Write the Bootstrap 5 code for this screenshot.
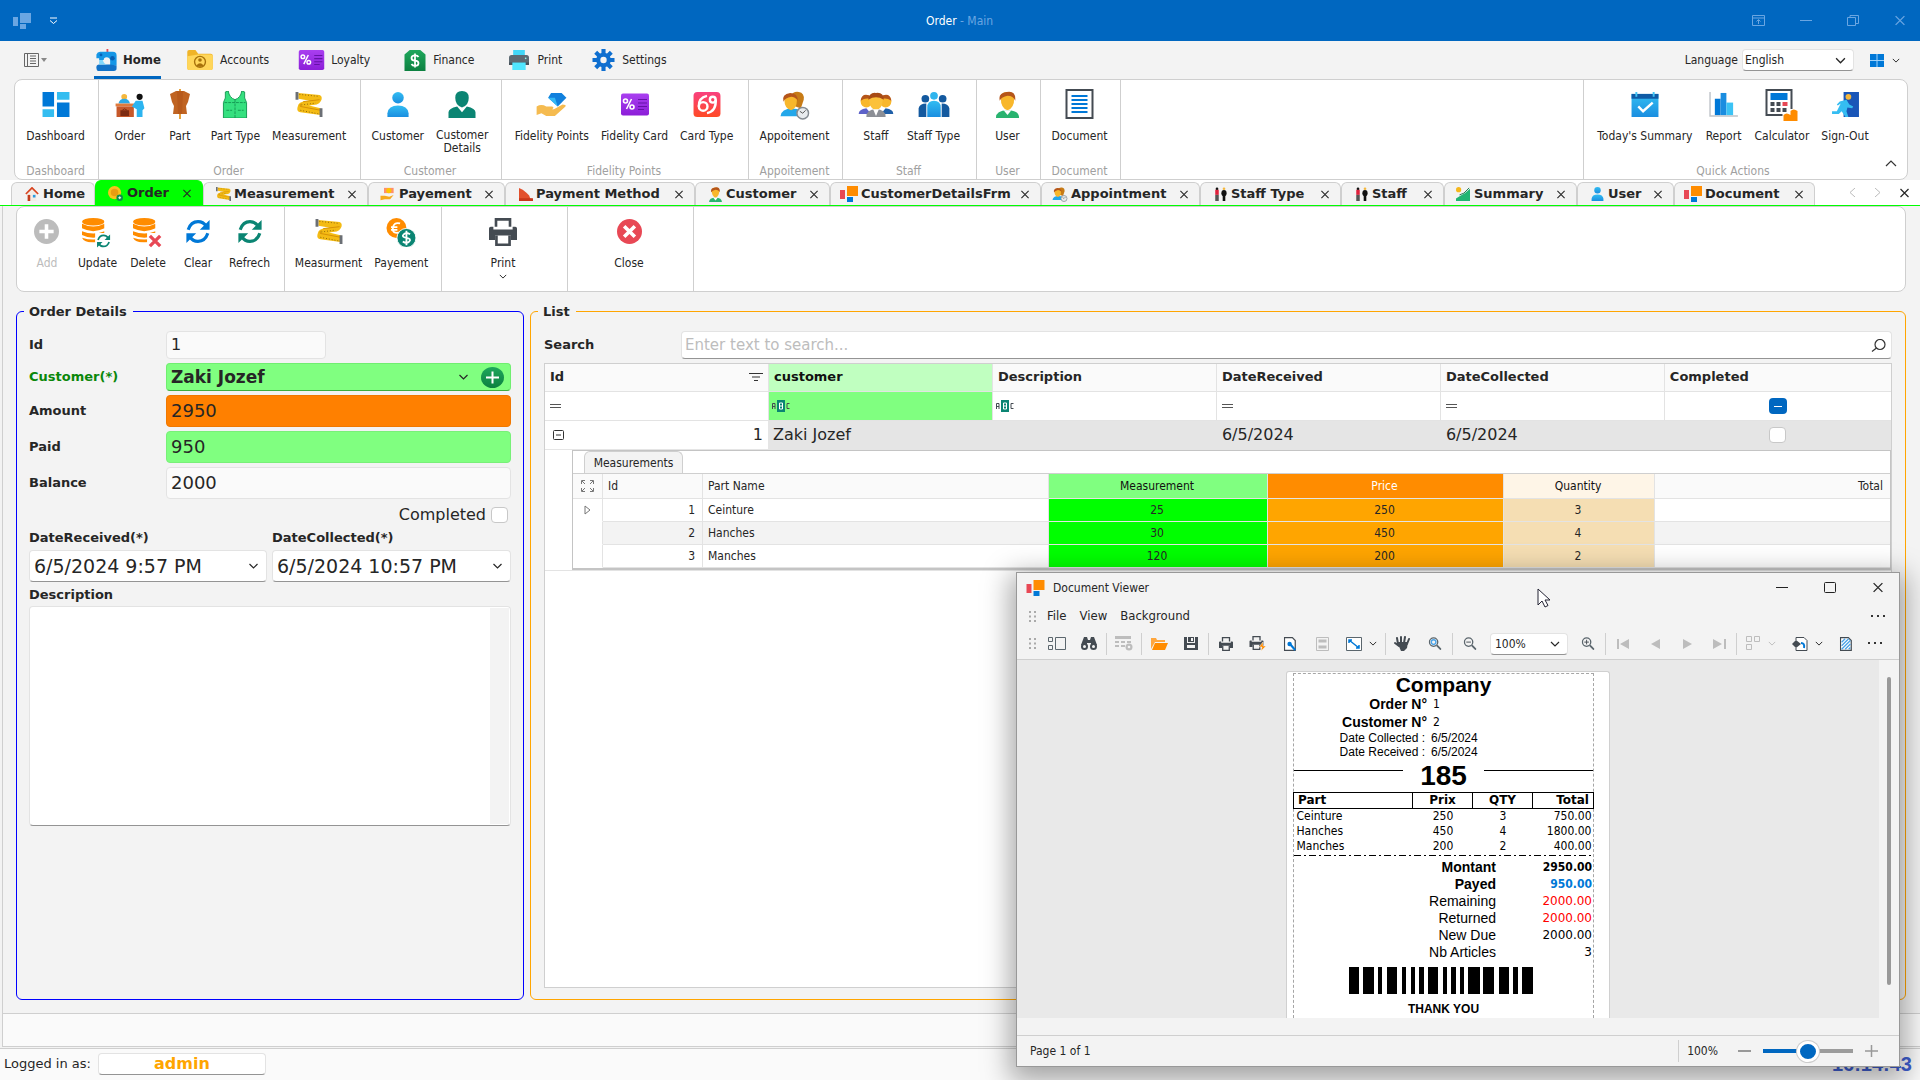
<!DOCTYPE html>
<html lang="en">
<head>
<meta charset="utf-8">
<meta name="viewport" content="width=device-width, initial-scale=1">
<title>Order - Main</title>
<link href="https://cdn.jsdelivr.net/npm/bootstrap@5.3.0/dist/css/bootstrap.min.css" rel="stylesheet">
<style>
:root{--line:#cfcfcf;--soft:#e3e3e3;--accent:#0067c0;--wide:"DejaVu Sans",Verdana,sans-serif;--ui:"DejaVu Sans Condensed","DejaVu Sans",Tahoma,sans-serif;--arial:"Liberation Sans",Arial,sans-serif}
body{background:#f3f3f3;color:#262626;font:12px/14px var(--ui);min-height:100vh;overflow:hidden}
svg{display:block;flex:none}
button{background:none;border:0;padding:0;color:inherit;font:inherit}
input,select,textarea{font:inherit;color:inherit;border:0;background:none;padding:0;min-width:0;outline:0}
select{appearance:none}
.strong{font:bold 13px/16px var(--wide)}
.titlebar{height:41px;background:var(--accent);color:#fff;padding:0 14px 0 13px}
.titlebar .grow{flex:1 1 0}
.dim{color:#6aa6e2}
.menubar{height:38px;padding:0 20px 0 24px}
.menubar .entry{height:38px;display:flex;align-items:center;gap:6px;color:inherit;text-decoration:none;border-top:3px solid transparent;border-bottom:3px solid transparent}
.menubar .entry.on{border-bottom-color:var(--accent);font-weight:bold;font-size:13px;gap:4px}
.field{background:#fff;border:1px solid var(--soft);border-bottom-color:#949494;border-radius:4px;display:flex;align-items:center}
.ribbon{display:grid;grid-template-columns:84px 262px 141px 247px 94px 134px 64px 80px 1fr 323px;margin:0 12px 0 14px;background:#fff;border:1px solid var(--line);border-radius:8px;height:101px}
.ribbon>div{border-right:1px solid var(--line);display:flex;flex-direction:column;align-items:center;padding-right:2px}
.ribbon>div:last-child{border-right:0;position:relative;padding-right:25px}
.caption-s{color:#a0a0a0;margin-top:auto;margin-bottom:1px}
.tool{min-width:50px;padding:12px 6px 0;display:flex;flex-direction:column;align-items:center;text-align:center}
.tool svg{margin-bottom:12px}
.tabs{display:grid;grid-template-columns:84px 108px 165px 137px 190px 135px 211px 159px 141px 103px 133px 97px 141px 1fr;align-items:end;background:#fff;padding:0 8px 0 11px;height:26px;border-bottom:1px solid #00ff00}
.tabs .doc{height:23px;background:#f3f3f3;border:1px solid var(--line);border-bottom:0;border-radius:6px 6px 0 0;display:flex;align-items:center;padding:0 10px 0 12px;gap:3px;font:bold 13px/16px var(--wide);white-space:nowrap}
.tabs .doc button{margin-left:auto}
.tabs .doc.on{height:25px;background:#00ff00;border-color:#00ff00;padding-left:11px;z-index:1}
.workspace{border-left:1px solid var(--line);margin-left:2px;flex:1;display:flex;flex-direction:column;padding:0 14px 0 13px}
.toolbar2{display:grid;grid-template-columns:268px 157px 126px 126px 1fr;background:#fff;border:1px solid var(--line);border-radius:8px;height:86px}
.toolbar2>div{border-right:1px solid var(--line);display:flex;justify-content:center;padding-right:3px}
.toolbar2>div:last-child{border:0}
.boxed{border:1px solid blue;border-radius:6px;position:relative;height:689px}
.boxed>.strong:first-child{position:absolute;top:-8px;left:7px;padding:0 6px 0 5px;background:#f3f3f3}
.boxed.gold{border-color:#ffa500}
.details{width:508px;padding:19px 12px 0;flex:none}
.frow{display:grid;grid-template-columns:137px 1fr;align-items:center;margin-bottom:4px}
.frow .field{height:32px;font:18px/24px var(--wide);padding:0 4px}
.ro{background:#fafafa!important;border-bottom-color:var(--soft)!important}
.big{font:18px/24px var(--wide)}
.datebox{height:32px;padding:0 7px 0 4px;font:19px/24px var(--wide)}
.datebox input{width:100%}
.check{appearance:none;width:17px;height:16px;background:#fff;border:1px solid #c8c8c8;border-radius:4px}
.listbox{padding:19px 13px 11px;margin-left:6px;flex:1;display:flex;flex-direction:column}
.gridwrap{border:1px solid var(--line);background:#fff;flex:1;margin-top:4px}
.data{width:100%;table-layout:fixed;border-collapse:separate;border-spacing:0}
.data th,.data td{border-right:1px solid var(--soft);border-bottom:1px solid var(--soft);padding:0 5px;vertical-align:middle}
.data>thead>tr>th{height:28px;padding-bottom:1px}
.data>thead>tr.fl>td,.data>tbody>tr>td{height:29px}
.data th:last-child,.data td:last-child{border-right:0}
.data th{background:#fafafa;font:bold 13px/16px var(--wide)}
.data .picked td{background:#e5e5e5;border-color:#e5e5e5;font:16px/20px var(--wide)}
.data .picked td:first-child{background:#fff}
.data>tbody>tr>td.nest{padding:0 0 0 27px;height:auto}
.nestbox{border:1px solid #c4c4c4;border-bottom-width:2px}
.ntab{margin-left:11px;width:99px;height:22px;background:#f3f3f3;border:1px solid var(--line);border-bottom:0;border-radius:6px 6px 0 0;display:flex;justify-content:center;align-items:center}
.sub{width:100%;table-layout:fixed;border-collapse:separate;border-spacing:0;border-top:1px solid var(--line)}
.sub th{font:12px/14px var(--ui);height:25px}
.sub th.text-end,.sub th.text-center,.sub td.text-center,.sub td.text-end{padding-right:7px}
.sub td{height:23px}
.sub tr:nth-child(even) td{background:#f3f3f3}
.sub tr td:first-child{background:#fff!important;border-bottom-color:#fff}
.sub td.m{background:#00ff00!important}.sub td.p{background:#ffa500!important}.sub td.q{background:#f5deb3!important}
.sub th.m{background:#80ff80;color:#111}.sub th.p{background:#ff8c00;color:#fff}.sub th.q{background:#fef5e7;color:#111}
.strip{height:34px;margin:13px -14px 0 -13px;background:#fafafa;border-top:1px solid var(--line);border-bottom:1px solid var(--line)}
.footbar{height:33px;margin-top:1px;border-top:1px solid var(--line);background:#fafafa;padding:0 8px 2px 4px;font:13px/16px var(--wide)}
.clock{font:bold 20px/24px var(--arial);color:#3f5fd0}
.viewer{position:absolute;right:20px;bottom:13px;width:884px;height:495px;background:#f3f3f3;border:1px solid #989898;box-shadow:0 8px 26px 6px rgba(0,0,0,.34);display:flex;flex-direction:column}
.vbar{display:flex;align-items:center;height:30px;border-bottom:1px solid var(--line);padding:0 0 2px 8px}
.slot{flex:none;width:32px;display:flex;justify-content:center;align-items:center}
.slot.wide{width:46px;gap:7px}
.rule{flex:none;width:1px;height:22px;margin:0 1px;background:#cfcfcf}
.canvas{flex:1;display:flex;background:#e9e9e9;min-height:0;overflow:hidden}
.sheet{width:324px;margin:11px auto 0;background:#fff;border:1px solid #d0d0d0;border-bottom:0;border-radius:3px 3px 0 0;padding:1px 15px 0 6px}
.inner{border:1px dashed #a6a6a6;border-bottom:0;height:100%;color:#000}
.r2{display:grid;grid-template-columns:133px 1fr;column-gap:6px;align-items:center}
.r2>:first-child{text-align:right;white-space:nowrap}
.ar{font-family:var(--arial)}
.rcpt{width:301px;margin-left:-1px;table-layout:fixed;border-collapse:collapse}
.rcpt th{border:1px solid #000;font:bold 12px/15px var(--wide);padding:0 4px}
.rcpt td{font:12px/15px var(--ui);padding:0 2px 0 3px}
.sum{display:grid;grid-template-columns:202px 1fr;font:14px/17px var(--arial);padding-right:1px;margin-top:2px}
.sum>*{text-align:right}
.sum>:nth-child(even){font:12px/16px var(--wide)}
.sum .hv{font:bold 12px/16px var(--ui)}
.zoomer{appearance:none;width:90px;height:22px;background:linear-gradient(90deg,var(--accent) 50%,#9c9c9c 50%) center/100% 4px no-repeat;border-radius:2px}
.zoomer::-webkit-slider-thumb{appearance:none;width:22px;height:21px;border-radius:50%;background:var(--accent);border:3px solid #fff;box-shadow:0 0 0 1px #ccc}
.find::placeholder{color:#bdbdbd;opacity:1}
.cursor{position:absolute;left:520px;top:15px}
</style>
</head>
<body class="d-flex flex-column">
<svg width="0" height="0" class="position-absolute">
<defs>
<linearGradient id="gp" x2="0" y2="1"><stop stop-color="#a93ff0"/><stop offset="1" stop-color="#8c1ed8"/></linearGradient>
<linearGradient id="gr" x2="0" y2="1"><stop stop-color="#f9417f"/><stop offset="1" stop-color="#ff4a25"/></linearGradient>
<linearGradient id="gb" x2="0" y2="1"><stop stop-color="#33bdf2"/><stop offset="1" stop-color="#1a8ee0"/></linearGradient>
<linearGradient id="gg" x2="0" y2="1"><stop stop-color="#1ea75c"/><stop offset="1" stop-color="#0c8040"/></linearGradient>
<symbol id="x" viewBox="0 0 10 10"><path d="M1 1l8 8M9 1L1 9" stroke="currentColor" stroke-width="1.2" fill="none"/></symbol>
<symbol id="dn" viewBox="0 0 10 6"><path d="M1 1l4 4 4-4" stroke="currentColor" stroke-width="1.2" fill="none"/></symbol>
<symbol id="logo" viewBox="0 0 18 16"><path d="M0 4h5v9H0z" fill="#e84855"/><path d="M7 0h11v10H7z" fill="#ff8c00"/><path d="M7 11h6v5H7z" fill="#0078d7"/></symbol>
<symbol id="sew" viewBox="0 0 24 24"><path d="M12 0h2v4h-2z" fill="#e84855"/><path d="M1 6q1-3 4-3h14q4 0 4 4v11h-7v-5q0-4-4-4-3 0-3 3H4v-2H1z" fill="#1596e6"/><path d="M1 20q0-3 3-3h12l7 1v3q0 3-3 3H3q-2 0-2-4z" fill="#1172c8"/><path d="M4 12h4q1 5 6 5H4z" fill="#7fd6fb"/><circle cx="18.500" cy="10" r="2.500" fill="#065fb5"/><circle cx="6" cy="6.500" r="1.500" fill="#065fb5"/></symbol>
<symbol id="folder" viewBox="0 0 28 22"><path d="M0 2q0-2 2-2h7l3 4h14q2 0 2 2v14q0 2-2 2H2q-2 0-2-2z" fill="#f0b428"/><path d="M0 7l12-2h14q2 0 2 2v13q0 2-2 2H2q-2 0-2-2z" fill="#ffd65a"/><circle cx="14" cy="13" r="6" fill="none" stroke="#a8720b" stroke-width="1.500"/><circle cx="14" cy="11" r="2" fill="#a8720b"/><path d="M10 17q4-5 8 0q-4 3-8 0z" fill="#a8720b"/></symbol>
<symbol id="card" viewBox="0 0 28 22"><rect width="28" height="22" rx="2" fill="url(#gp)"/><g stroke="#fff" fill="none" stroke-width="1.600"><circle cx="4.500" cy="7.500" r="2"/><circle cx="11" cy="13.500" r="2"/><path d="M10.500 5.500l-5 10"/></g><path d="M17 6h9M17 9.500h9M17 13h9M17 16h6" stroke="#6512a8" stroke-width="1.200"/></symbol>
<symbol id="tag" viewBox="0 0 24 24"><path d="M0 5L6 0h12l6 5v19H0z" fill="url(#gg)"/><path d="M16 8q-1-2-4-2-4 0-4 3t4 3 4 3-4 3q-3 0-4-2M12 4v16" stroke="#fff" stroke-width="2" fill="none"/></symbol>
<symbol id="prn" viewBox="0 0 24 24"><path d="M5 0h14v7H5z" fill="#42d7f7"/><path d="M0 9q0-3 3-3h18q3 0 3 3v9H0z" fill="#5d6a73"/><path d="M0 15h24v3H0z" fill="#46515a"/><path d="M4 15h16v9H4z" fill="#50e6ff"/><circle cx="20" cy="10" r="1" fill="#9fe"/></symbol>
<symbol id="gear" viewBox="0 0 24 24"><g stroke="#0f6fd0" stroke-width="4.500"><path d="M12 0v24M0 12h24M3.500 3.500l17 17M20.500 3.500l-17 17"/></g><circle cx="12" cy="12" r="8" fill="#0f6fd0"/><circle cx="12" cy="12" r="3.500" fill="#f3f3f3"/></symbol>
<symbol id="dash" viewBox="0 0 28 26"><path d="M0 0h12v15H0zM15 11h13v15H15z" fill="#0078d7"/><path d="M15 0h13v8H15zM0 18h12v8H0z" fill="#34bdf0"/></symbol>
<symbol id="desk" viewBox="0 0 30 26"><circle cx="9" cy="5" r="3" fill="#f5b73c"/><path d="M3 12q1-5 6-5t6 5z" fill="#2da9e6"/><path d="M0 12h20v3H0z" fill="#e07a3c"/><path d="M1 15h18v11H1z" fill="#c6582a"/><path d="M5 19h9v6H5z" fill="#7c2b12"/><path d="M7 19q2-3 5 0" stroke="#7c2b12" fill="none"/><circle cx="25" cy="5" r="3.200" fill="#111"/><path d="M21 9h7l2 8-2 2v7h-6v-8l-5-3z" fill="#2cb4f0"/></symbol>
<symbol id="torso" viewBox="0 0 20 30"><path d="M9 0h2v30H9z" fill="#e8a33a"/><path d="M6 2h8l6 3-2 8-2 4 1 8H3l1-8-2-4L0 5z" fill="#c06422"/><path d="M7 2h6l-1 23H8z" fill="#a94c14" opacity=".4"/></symbol>
<symbol id="vest" viewBox="0 0 26 28"><path d="M6 0q1 7 7 9 6-2 7-9l3 1q-1 7 2 11v16H1V12q3-4 2-11z" fill="#35e07f" stroke="#159a53"/><path d="M13 9v19M2 12h22M4 20h6M16 20h6" stroke="#159a53" fill="none" stroke-dasharray="3 1"/></symbol>
<symbol id="tape" viewBox="0 0 28 26"><path d="M3 1l22 2q3 1 2 5l-1 2q-1 2-4 3l-8 1 12 3v7L5 21q-4-1-3-5l1-3q1-2 5-3l7-1L3 7z" fill="#f4bb14"/><path d="M8 10l17-2M6 12q-2 1-1 3l21 4" stroke="#d58f05" fill="none"/><path d="M4 2.500l20 2M6 13.500l15-2M5 19l20 4" stroke="#8c6508" stroke-dasharray="1 2" fill="none"/><path d="M0 0h3v8H0zM25 17h3v9h-3z" fill="#6b6f75"/></symbol>
<symbol id="person" viewBox="0 0 22 26"><circle cx="11" cy="6" r="6" fill="url(#gb)"/><path d="M0 26V22Q1 14 11 14t11 8v4z" fill="url(#gb)"/></symbol>
<symbol id="man" viewBox="0 0 28 28"><path d="M7 7q0-7 7-7t7 7q0 8-7 10Q7 15 7 7zM0 28v-6q0-4 9-6l5 6 5-6q9 2 9 6v6z" fill="#0b8573"/></symbol>
<symbol id="gem" viewBox="0 0 32 26"><path d="M15 1h11l5 5-9 9-10-9z" fill="#1180dd"/><path d="M12 6l10 9-3-9z" fill="#34b8f5"/><path d="M0 15q5-3 10 0h6q3 1 0 3h-5 7l9-5q4 0 3 2L19 25H10l-5-3-5 2z" fill="#f5bb50"/></symbol>
<symbol id="sixnine" viewBox="0 0 28 26"><rect width="28" height="26" rx="4" fill="url(#gr)"/><g fill="none" stroke="#fff" stroke-width="2.500"><circle cx="10" cy="15" r="4.500"/><path d="M14 4Q5 6 5.500 15"/><circle cx="20" cy="8" r="3"/><path d="M23 8q1 12-9 14"/></g></symbol>
<symbol id="face" viewBox="0 0 24 28"><path d="M0 28q0-8 12-8t12 8z" fill="#28b36f"/><path d="M5 7q0-6 7-6t7 6q0 11-7 13Q5 18 5 7z" fill="#f8b72c"/><path d="M4 10Q2 2 11 1q10-2 9 9-2-5-8-5-6 1-8 5z" fill="#b5551a"/><path d="M8 20h8l-4 5z" fill="#fff"/></symbol>
<symbol id="appt" viewBox="0 0 30 30"><path d="M11 5q2-5 8-4t5 8l-3 9-8-3z" fill="#c77b16"/><path d="M0 26q1-8 12-8t14 8z" fill="#23a7ea"/><path d="M4 9q0-6 7-6t6 6q0 9-6 11Q4 18 4 9z" fill="#f8b72c"/><path d="M3 11Q1 3 10 2q8 0 8 8-3-4-7-4-6 1-8 5z" fill="#b5551a"/><circle cx="23" cy="23" r="6" fill="#e8ebee" stroke="#858c93" stroke-width="1.500"/><path d="M20 21l3 2 3-3" stroke="#555" fill="none"/></symbol>
<symbol id="staff" viewBox="0 0 36 26"><path d="M0 23q0-5 8-6l5 6z" fill="#5d62c9"/><path d="M36 23q0-5-8-6l-5 6z" fill="#1f5fa8"/><circle cx="8" cy="10" r="6" fill="#f8b72c"/><circle cx="28" cy="10" r="6" fill="#f8b72c"/><path d="M2 9q1-7 7-6 4 0 5 5-6-3-12 1zM34 9q-1-7-7-6-4 0-5 5 6-3 12 1z" fill="#b5551a"/><path d="M8 26q0-8 10-8t10 8z" fill="#8c8f96"/><path d="M11 8q0-7 7-7t7 7q0 9-7 11-7-2-7-11z" fill="#fbc13a"/><path d="M10 8q1-8 8-7 8-1 8 7-8-5-16 0z" fill="#a84b15"/><path d="M15 18h6l-3 7z" fill="#fff"/></symbol>
<symbol id="staff2" viewBox="0 0 32 26"><circle cx="7" cy="7" r="4" fill="#13599f"/><circle cx="25" cy="7" r="4" fill="#13599f"/><path d="M0 26V17q1-5 8-5v14zM32 26V17q-1-5-8-5v14z" fill="#13599f"/><circle cx="16" cy="4" r="4" fill="#2fb5ee"/><path d="M9 26V16q0-7 7-7t7 7v10z" fill="url(#gb)"/></symbol>
<symbol id="docu" viewBox="0 0 28 30"><path d="M1 1h26v28H1z" fill="#fff" stroke="#444b52" stroke-width="2"/><path d="M6 7h16M6 11h16M6 15h16M6 19h16M6 23h16" stroke="#0078d7" stroke-width="1.800"/></symbol>
<symbol id="cal" viewBox="0 0 28 26"><path d="M0 2h28v24H0z" fill="url(#gb)"/><path d="M0 2h28v5H0z" fill="#0f5ba5"/><path d="M5 0v5M23 0v5" stroke="#43c5f5" stroke-width="2"/><path d="M7 15l5 5 10-9" stroke="#fff" stroke-width="2.500" fill="none"/></symbol>
<symbol id="chart" viewBox="0 0 30 26"><path d="M1 0v25h29" stroke="#bfc4c9" stroke-width="1.500" fill="none"/><path d="M6 7h6v17H6z" fill="#0078d7"/><path d="M12 1h6v23h-6z" fill="#1a8de0"/><path d="M18 11h7v13h-7z" fill="#3cc3f5"/></symbol>
<symbol id="calc" viewBox="0 0 32 32"><path d="M1 1h25v25H1z" fill="#fff" stroke="#444b52" stroke-width="2"/><path d="M5 4h17v7H5z" fill="#0078d7"/><path d="M5 13h4v4H5zM11 13h4v4h-4zM5 19h4v4H5zM11 19h4v4h-4zM17 19h4v4h-4z" fill="#444b52"/><path d="M17 13h5v4h-5z" fill="#e84855"/><path d="M17 32v-8h6v-4h9v12z" fill="#fff"/><path d="M18 26q3-3 7 0v-4q3-3 7 0v10H18z" fill="#ff8c00"/></symbol>
<symbol id="exit" viewBox="0 0 28 26"><path d="M12 0h16v26H12z" fill="#1a56b8"/><circle cx="17" cy="5" r="3" fill="#f5b73c"/><path d="M8 10l7-2 3 5 4 2-1 2-5-1-1 4 2 6h-3l-4-6-3 3H0v-3h5l4-8-3 2-1-1z" fill="#35bdf2"/></symbol>
<symbol id="house" viewBox="0 0 16 16"><path d="M1 8l7-7 7 7" stroke="#d8431f" stroke-width="2" fill="none"/><path d="M3 8l5-5 5 5v8H3z" fill="#f3ece6"/><path d="M3 9h3v7H3z" fill="#c33c1c"/><path d="M9 9h3v3H9z" fill="#2a9be0"/></symbol>
<symbol id="coin" viewBox="0 0 16 16"><circle cx="7" cy="7" r="7" fill="#f8c21c"/><circle cx="7" cy="7" r="4" fill="#e89d11"/><circle cx="12.500" cy="12.500" r="3.500" fill="#0d8a4c"/><path d="M11 12.500h3M12.500 11v3" stroke="#fff"/></symbol>
<symbol id="payh" viewBox="0 0 16 16"><path d="M4 1h11v6H4z" fill="#ff8f6b"/><circle cx="9.500" cy="4" r="3" fill="#ffc400"/><path d="M0 10h5l5 1 5-2-4 5H5l-5 1z" fill="#f5a91c"/></symbol>
<symbol id="slice" viewBox="0 0 16 14"><path d="M1 0l4 2 4 3 3 3 1 3 3 1v2H1z" fill="#e2502d"/><path d="M1 11h15v3H1z" fill="#c9371a"/></symbol>
<symbol id="pair" viewBox="0 0 16 16"><path d="M2 3h4v6H2z" fill="#e0203c"/><circle cx="4" cy="2" r="1.500" fill="#111"/><path d="M2 9h4v7H2z" fill="#555"/><circle cx="12" cy="2" r="1.500" fill="#f5b73c"/><ellipse cx="12" cy="7" rx="3" ry="3.500" fill="#111"/><path d="M10.500 9h3v7h-3z" fill="#111"/></symbol>
<symbol id="grow" viewBox="0 0 16 16"><circle cx="3" cy="3" r="3" fill="#f5b71c"/><path d="M0 13l5-3 5-3 6-5v14H0z" fill="#21b573"/><path d="M4 9l5-2 6-6" stroke="#0c6b40" fill="none"/></symbol>
<symbol id="plus" viewBox="0 0 28 28"><circle cx="14" cy="14" r="14" fill="currentColor"/><path d="M14 6v16M6 14h16" stroke="#fff" stroke-width="4"/></symbol>
<symbol id="sync" viewBox="0 0 28 28"><path d="M3 12Q6 3 14 3q6 0 9 5M25 16q-3 9-11 9-6 0-9-5" fill="none" stroke="currentColor" stroke-width="3.500"/><path d="M27 1v11H16zM1 27V16h11z" fill="currentColor"/></symbol>
<symbol id="db" viewBox="0 0 24 26"><ellipse cx="12" cy="4" rx="12" ry="4" fill="#ff8c00"/><path d="M0 6q12 6 24 0v5q-12 6-24 0zM0 14q12 5 24 0v4q-12 6-24 0zM0 21q12 4 24 0-2 5-12 5T0 21z" fill="#ff8c00"/></symbol>
<symbol id="dbs" viewBox="0 0 32 32"><use href="#db" width="24" height="26"/><rect x="14" y="16" width="18" height="16" fill="#fff"/><use href="#sync" x="15" y="17" width="16" height="15" color="#0b8573"/></symbol>
<symbol id="dbx" viewBox="0 0 32 32"><use href="#db" width="24" height="26"/><rect x="15" y="16" width="17" height="16" fill="#fff"/><path d="M18 19l11 11M29 19L18 30" stroke="#e84855" stroke-width="3.500"/></symbol>
<symbol id="coins" viewBox="0 0 32 32"><circle cx="11" cy="11" r="11" fill="#ff8c00"/><path d="M15 6q-7-2-8 5t8 5M5 10h7M5 13h7" stroke="#fff" stroke-width="2" fill="none"/><circle cx="22" cy="22" r="10.500" fill="#0b8573" stroke="#fff"/><path d="M26 18q-4-3-7 0t3 4 3 4-7 0M22 14v16" stroke="#fff" stroke-width="2" fill="none"/></symbol>
<symbol id="print" viewBox="0 0 32 32"><path d="M8 10V1.500h16V10" fill="none" stroke="#444b52" stroke-width="3"/><path d="M0 12q0-2 2-2h3v3h22v-3h3q2 0 2 2v13h-7v-5H7v5H0z" fill="#444b52"/><path d="M8.500 20v10.500h15V20" fill="none" stroke="#444b52" stroke-width="3"/></symbol>
<symbol id="closer" viewBox="0 0 28 28"><circle cx="14" cy="14" r="14" fill="#e84855"/><path d="M8 8l12 12M20 8L8 20" stroke="#fff" stroke-width="4"/></symbol>
<symbol id="abc" viewBox="0 0 18 12"><path d="M5 0h8v12H5z" fill="#0b8573"/><path d="M7.500 9V3h3v6zM7.500 6h3" stroke="#fff" fill="none"/><path d="M.5 9V3.500h2.500V9M.5 6.500H3M17.500 3.500h-2.500v5h2.500" stroke="#444b52" fill="none"/></symbol>
<symbol id="eq" viewBox="0 0 11 4"><path d="M0 .5h11M0 3.500h11" stroke="#555"/></symbol>
<symbol id="grip" viewBox="0 0 8 11"><path d="M1 0v11M6 0v11" stroke="#aaa" stroke-width="2" stroke-dasharray="2 2.500"/></symbol>
<symbol id="mag" viewBox="0 0 14 14"><circle cx="5.500" cy="5.500" r="4.500" fill="none" stroke="#5b666d" stroke-width="1.400"/><path d="M9 9l4.500 4.500" stroke="#5b666d" stroke-width="2"/></symbol>
<symbol id="leaf" viewBox="0 0 14 16"><path d="M.7.7h9L13 4v11.300H.7z" fill="#fff" stroke="#444b52" stroke-width="1.400"/></symbol>
</defs>
</svg>

<header class="titlebar d-flex align-items-center">
  <div class="grow d-flex align-items-center" style="gap:18px">
    <svg width="18" height="16" viewBox="0 0 18 16" fill="#6aa6e2"><path d="M0 4h5v9H0zM7 0h11v10H7zM7 11h6v5H7z"/></svg>
    <button aria-label="Customize"><svg width="9" height="8" viewBox="0 0 9 8"><path d="M1 1h7M1 3.500l3.500 3 3.500-3" stroke="#fff" fill="none"/></svg></button>
  </div>
  <div>Order <span class="dim">- Main</span></div>
  <div class="grow d-flex align-items-center justify-content-end dim" style="gap:35px">
    <svg width="13" height="11" viewBox="0 0 13 11" fill="none" stroke="#6aa6e2"><path d="M.5.5h12v10H.5zM.5 3h12M6.500 9V5M4.500 6.500l2-2 2 2"/></svg>
    <svg width="12" height="11"><path d="M0 5.500h12" stroke="#6aa6e2"/></svg>
    <svg width="12" height="11" viewBox="0 0 12 11" fill="none" stroke="#6aa6e2"><path d="M.5 2.500h8v8h-8zM3 2.500v-2h8.500v8h-3"/></svg>
    <svg width="12" height="11"><use href="#x"/></svg>
  </div>
</header>

<nav class="menubar d-flex align-items-center">
  <button class="d-flex align-items-center" style="width:70px" aria-label="Application menu"><svg width="24" height="14" viewBox="0 0 24 14"><path d="M.5.5h14v13H.5zM3.500 0v14M6 3h6M6 5.500h6M6 8h6M6 10.500h6" fill="none" stroke="#666"/><path d="M17 5h6l-3 4z" fill="#888"/></svg></button>
  <div class="d-flex" style="gap:25px">
    <a href="#" class="entry on"><svg width="25" height="22"><use href="#sew"/></svg>Home</a>
    <a href="#" class="entry"><svg width="28" height="20"><use href="#folder"/></svg>Accounts</a>
    <a href="#" class="entry ms-1"><svg width="27" height="20"><use href="#card"/></svg>Loyalty</a>
    <a href="#" class="entry ms-2"><svg width="24" height="21"><use href="#tag"/></svg>Finance</a>
    <a href="#" class="entry ms-2"><svg width="24" height="20"><use href="#prn"/></svg>Print</a>
    <a href="#" class="entry ms-1"><svg width="25" height="22"><use href="#gear"/></svg>Settings</a>
  </div>
  <div class="ms-auto d-flex align-items-center">
    <label for="lang" class="me-1">Language</label>
    <div class="field" style="width:112px;height:22px;padding:0 7px 0 2px"><select id="lang" class="flex-grow-1"><option>English</option></select><svg width="11" height="7"><use href="#dn"/></svg></div>
    <button class="d-flex align-items-center gap-2" style="margin-left:16px" aria-label="Skins"><svg width="14" height="13" viewBox="0 0 14 13"><path d="M0 0h14v13H0z" fill="#0078d7"/><path d="M7 0v13M0 6.500h14" stroke="#9fd2fa"/></svg><svg width="8" height="5"><use href="#dn"/></svg></button>
  </div>
</nav>

<section class="ribbon">
  <div><button class="tool"><svg width="28" height="25"><use href="#dash"/></svg>Dashboard</button><span class="caption-s">Dashboard</span></div>
  <div><div class="d-flex"><button class="tool"><svg width="30" height="25"><use href="#desk"/></svg>Order</button><button class="tool"><svg width="20" height="30" style="margin:-3px 0 10px"><use href="#torso"/></svg>Part</button><button class="tool"><svg width="26" height="27" style="margin:-1px 0 11px"><use href="#vest"/></svg>Part Type</button><button class="tool"><svg width="28" height="25"><use href="#tape"/></svg>Measurement</button></div><span class="caption-s">Order</span></div>
  <div><div class="d-flex align-items-start"><button class="tool"><svg width="22" height="25"><use href="#person"/></svg>Customer</button><button class="tool" style="line-height:13px"><svg width="28" height="27" style="margin:-1px 0 11px"><use href="#man"/></svg>Customer<br>Details</button></div><span class="caption-s">Customer</span></div>
  <div><div class="d-flex"><button class="tool"><svg width="32" height="25"><use href="#gem"/></svg>Fidelity Points</button><button class="tool"><svg width="28" height="25"><use href="#card"/></svg>Fidelity Card</button><button class="tool"><svg width="28" height="25"><use href="#sixnine"/></svg>Card Type</button></div><span class="caption-s">Fidelity Points</span></div>
  <div><button class="tool"><svg width="32" height="29" style="margin:-1px 0 9px"><use href="#appt"/></svg>Appoitement</button><span class="caption-s">Appoitement</span></div>
  <div><div class="d-flex"><button class="tool"><svg width="36" height="25"><use href="#staff"/></svg>Staff</button><button class="tool"><svg width="32" height="25"><use href="#staff2"/></svg>Staff Type</button></div><span class="caption-s">Staff</span></div>
  <div><button class="tool"><svg width="25" height="27" style="margin:-1px 0 11px"><use href="#face"/></svg>User</button><span class="caption-s">User</span></div>
  <div><button class="tool"><svg width="29" height="30" style="margin:-3px 0 10px"><use href="#docu"/></svg>Document</button><span class="caption-s">Document</span></div>
  <div></div>
  <div><div class="d-flex"><button class="tool"><svg width="28" height="25"><use href="#cal"/></svg>Today's Summary</button><button class="tool"><svg width="29" height="25"><use href="#chart"/></svg>Report</button><button class="tool"><svg width="33" height="32" style="margin:-3px 0 8px"><use href="#calc"/></svg>Calculator</button><button class="tool"><svg width="29" height="25"><use href="#exit"/></svg>Sign-Out</button></div><span class="caption-s">Quick Actions</span>
    <button class="position-absolute" style="right:10px;bottom:12px" aria-label="Collapse ribbon"><svg width="12" height="8" viewBox="0 0 12 8"><path d="M1 7l5-5 5 5" stroke="#333" fill="none" stroke-width="1.200"/></svg></button></div>
</section>

<div class="tabs">
  <div class="doc"><svg width="16" height="14"><use href="#house"/></svg>Home</div>
  <div class="doc on"><svg width="17" height="15"><use href="#coin"/></svg>Order<button aria-label="Close tab"><svg width="10" height="9"><use href="#x"/></svg></button></div>
  <div class="doc"><svg width="15" height="14"><use href="#tape"/></svg>Measurement<button aria-label="Close tab"><svg width="10" height="9"><use href="#x"/></svg></button></div>
  <div class="doc" style="padding-left:10px"><svg width="17" height="14"><use href="#payh"/></svg>Payement<button aria-label="Close tab"><svg width="10" height="9"><use href="#x"/></svg></button></div>
  <div class="doc"><svg width="15" height="13"><use href="#slice"/></svg>Payment Method<button aria-label="Close tab"><svg width="10" height="9"><use href="#x"/></svg></button></div>
  <div class="doc"><svg width="15" height="15"><use href="#face"/></svg>Customer<button aria-label="Close tab"><svg width="10" height="9"><use href="#x"/></svg></button></div>
  <div class="doc" style="padding-left:9px"><svg width="18" height="16"><use href="#logo"/></svg>CustomerDetailsFrm<button aria-label="Close tab"><svg width="10" height="9"><use href="#x"/></svg></button></div>
  <div class="doc" style="padding-left:10px"><svg width="16" height="15"><use href="#appt"/></svg>Appointment<button aria-label="Close tab"><svg width="10" height="9"><use href="#x"/></svg></button></div>
  <div class="doc"><svg width="15" height="14"><use href="#pair"/></svg>Staff Type<button aria-label="Close tab"><svg width="10" height="9"><use href="#x"/></svg></button></div>
  <div class="doc"><svg width="15" height="14"><use href="#pair"/></svg>Staff<button aria-label="Close tab"><svg width="10" height="9"><use href="#x"/></svg></button></div>
  <div class="doc" style="padding-left:10px"><svg width="16" height="14"><use href="#grow"/></svg>Summary<button aria-label="Close tab"><svg width="10" height="9"><use href="#x"/></svg></button></div>
  <div class="doc"><svg width="15" height="14"><use href="#person"/></svg>User<button aria-label="Close tab"><svg width="10" height="9"><use href="#x"/></svg></button></div>
  <div class="doc" style="padding-left:9px"><svg width="18" height="16"><use href="#logo"/></svg>Document<button aria-label="Close tab"><svg width="10" height="9"><use href="#x"/></svg></button></div>
  <div class="d-flex justify-content-end align-self-center" style="gap:18px;padding-right:2px"><svg width="7" height="9" viewBox="0 0 7 9"><path d="M6 0L1 4.500 6 9" fill="none" stroke="#bbb"/></svg><svg width="7" height="9" viewBox="0 0 7 9"><path d="M1 0l5 4.500L1 9" fill="none" stroke="#bbb"/></svg><svg width="11" height="10"><use href="#x"/></svg></div>
</div>

<main class="workspace">
  <section class="toolbar2">
    <div><button class="tool" disabled style="color:#bcbcbc"><svg width="27" height="25"><use href="#plus"/></svg>Add</button><button class="tool"><svg width="30" height="30" style="margin:-1px 0 8px"><use href="#dbs"/></svg>Update</button><button class="tool"><svg width="30" height="30" style="margin:-1px 0 8px"><use href="#dbx"/></svg>Delete</button><button class="tool"><svg width="28" height="25" color="#0078d7"><use href="#sync"/></svg>Clear</button><button class="tool"><svg width="28" height="25" color="#0b8573"><use href="#sync"/></svg>Refrech</button></div>
    <div><button class="tool"><svg width="28" height="25"><use href="#tape"/></svg>Measurment</button><button class="tool"><svg width="32" height="29" style="margin:-1px 0 9px"><use href="#coins"/></svg>Payement</button></div>
    <div><button class="tool"><svg width="32" height="28" style="margin:-1px 0 10px"><use href="#print"/></svg>Print<svg width="8" height="5" style="margin-top:4px"><use href="#dn"/></svg></button></div>
    <div><button class="tool"><svg width="27" height="25"><use href="#closer"/></svg>Close</button></div>
    <div></div>
  </section>

  <div class="d-flex" style="margin-top:19px">
    <section class="boxed details">
      <span class="strong">Order Details</span>
      <div class="frow"><label for="oid" class="strong">Id</label><div class="field ro" style="width:160px;height:28px;font-size:16px"><input id="oid" class="w-100" value="1" readonly></div></div>
      <div class="frow"><label for="cust" class="strong" style="color:#0a870a">Customer(*)</label><div class="field" style="height:28px;background:#80ff80;border-color:#70ee70;border-bottom-color:#3fae3f;font:bold 17px/22px var(--wide)"><select id="cust" class="flex-grow-1"><option>Zaki Jozef</option></select><svg width="11" height="6" style="margin-right:12px"><use href="#dn"/></svg><svg width="23" height="21" viewBox="0 0 23 21" style="margin-right:2px"><ellipse cx="11.500" cy="10.500" rx="11.500" ry="10.500" fill="url(#gg)"/><path d="M11.500 4.500v12M5 10.500h13" stroke="#fff" stroke-width="2"/></svg></div></div>
      <div class="frow"><label for="amt" class="strong">Amount</label><div class="field" style="background:#ff8000;border-color:#f07800"><input id="amt" class="w-100" value="2950"></div></div>
      <div class="frow"><label for="paid" class="strong">Paid</label><div class="field" style="background:#80ff80;border-color:#78f078"><input id="paid" class="w-100" value="950"></div></div>
      <div class="frow"><label for="bal" class="strong">Balance</label><div class="field ro"><input id="bal" class="w-100" value="2000" readonly></div></div>
      <div class="d-flex justify-content-end align-items-center" style="gap:5px;height:24px;padding-right:3px"><label for="done" style="font:16px/20px var(--wide)">Completed</label><input id="done" type="checkbox" class="check"></div>
      <div class="d-flex" style="gap:5px;margin-top:3px">
        <div style="flex:0 0 238px"><label for="d1" class="strong d-block mb-1">DateReceived(*)</label><div class="field datebox"><input id="d1" value="6/5/2024 9:57 PM"><svg width="11" height="6"><use href="#dn"/></svg></div></div>
        <div style="flex:1 1 0"><label for="d2" class="strong d-block mb-1">DateCollected(*)</label><div class="field datebox"><input id="d2" value="6/5/2024 10:57 PM"><svg width="11" height="6"><use href="#dn"/></svg></div></div>
      </div>
      <label for="desc" class="strong d-block" style="margin:5px 0 3px">Description</label>
      <div class="field align-items-stretch" style="height:220px;padding:1px"><textarea id="desc" class="flex-grow-1 big" style="resize:none"></textarea><div style="width:19px;background:#f3f3f3"></div></div>
    </section>

    <section class="boxed gold listbox">
      <span class="strong">List</span>
      <div class="d-flex align-items-center"><label for="q" class="strong" style="width:137px">Search</label><div class="field flex-grow-1" style="height:28px;padding:0 5px 0 3px"><input id="q" class="find flex-grow-1" style="font:15px/20px var(--wide)" placeholder="Enter text to search..."><svg width="15" height="13" viewBox="0 0 15 13"><ellipse cx="9" cy="5.500" rx="5" ry="5" fill="none" stroke="#333" stroke-width="1.200"/><path d="M5.500 9L1 12.500" stroke="#333" stroke-width="1.200"/></svg></div></div>
      <div class="gridwrap">
        <table class="data">
          <colgroup><col style="width:16.64%"><col style="width:16.64%"><col style="width:16.64%"><col style="width:16.64%"><col style="width:16.64%"><col></colgroup>
          <thead>
            <tr><th><div class="d-flex justify-content-between align-items-center">Id<svg width="14" height="8" viewBox="0 0 14 8"><path d="M0 .5h14M3 4h8M5 7.500h4" stroke="#333"/></svg></div></th><th style="background:#c0ffc0;color:#111">customer</th><th>Description</th><th>DateReceived</th><th>DateCollected</th><th>Completed</th></tr>
            <tr class="fl"><td><svg width="11" height="4"><use href="#eq"/></svg></td><td style="background:#80ff80;padding-left:3px"><svg width="18" height="12"><use href="#abc"/></svg></td><td style="padding-left:3px"><svg width="18" height="12"><use href="#abc"/></svg></td><td><svg width="11" height="4"><use href="#eq"/></svg></td><td><svg width="11" height="4"><use href="#eq"/></svg></td><td><svg width="18" height="16" viewBox="0 0 18 16" class="mx-auto"><rect width="18" height="16" rx="4" fill="#0067c0"/><path d="M5 8.500h8" stroke="#fff"/></svg></td></tr>
          </thead>
          <tbody>
            <tr class="picked"><td><div class="d-flex justify-content-between align-items-center"><svg width="11" height="10" viewBox="0 0 11 10" style="margin-left:3px"><rect x=".5" y=".5" width="10" height="9" rx="1" fill="none" stroke="#333"/><path d="M3 5h5" stroke="#333"/></svg>1</div></td><td style="padding-left:4px">Zaki Jozef</td><td></td><td>6/5/2024</td><td>6/5/2024</td><td class="text-center"><input type="checkbox" class="check d-block mx-auto" aria-label="Completed"></td></tr>
            <tr><td colspan="6" class="nest"><div class="nestbox">
              <div class="ntab">Measurements</div>
              <table class="sub">
                <colgroup><col style="width:30px"><col style="width:100px"><col style="width:346px"><col style="width:219px"><col style="width:236px"><col style="width:151px"><col></colgroup>
                <thead><tr><th><svg width="13" height="12" viewBox="0 0 13 12" class="mx-auto"><path d="M.5 4V.5H4M1 1l3 3M9 .5h3.500V4M12 1L9 4M.5 8v3.500H4M1 11l3-3M9 11.500h3.500V8M12 11L9 8" stroke="#777" fill="none"/></svg></th><th>Id</th><th>Part Name</th><th class="m text-center">Measurement</th><th class="p text-center">Price</th><th class="q text-center">Quantity</th><th class="text-end">Total</th></tr></thead>
                <tbody>
                <tr><td><svg width="7" height="10" viewBox="0 0 7 10" class="mx-auto"><path d="M1 1l5 4-5 4z" fill="none" stroke="#777"/></svg></td><td class="text-end">1</td><td>Ceinture</td><td class="m text-center">25</td><td class="p text-center">250</td><td class="q text-center">3</td><td></td></tr>
                <tr><td></td><td class="text-end">2</td><td>Hanches</td><td class="m text-center">30</td><td class="p text-center">450</td><td class="q text-center">4</td><td></td></tr>
                <tr><td></td><td class="text-end">3</td><td>Manches</td><td class="m text-center">120</td><td class="p text-center">200</td><td class="q text-center">2</td><td></td></tr>
                </tbody>
              </table></div></td></tr>
          </tbody>
        </table>
      </div>
    </section>
  </div>
  <div class="strip"></div>
</main>
<footer class="footbar d-flex align-items-center">
  <label for="who">Logged in as:</label>
  <div class="field" style="width:168px;height:22px;margin-left:7px"><input id="who" class="w-100 text-center" style="font:bold 16px/20px var(--wide);color:#ffa500" value="admin" readonly></div>
  <span class="clock ms-auto">16:14:43</span>
</footer>

<section class="viewer">
  <div class="d-flex align-items-center" style="height:29px;padding:0 15px 0 9px">
    <svg width="19" height="16" class="me-2"><use href="#logo"/></svg>Document Viewer
    <div class="ms-auto d-flex align-items-center" style="gap:36px"><svg width="12" height="11"><path d="M0 5.500h12" stroke="#222"/></svg><svg width="12" height="11"><rect x=".5" y=".5" width="11" height="10" rx="1" fill="none" stroke="#222"/></svg><svg width="12" height="11"><use href="#x"/></svg></div>
  </div>
  <nav class="d-flex align-items-center" style="height:28px;padding:0 14px 0 12px;font-size:13px;gap:13px">
    <svg width="8" height="11" style="margin-right:-3px"><use href="#grip"/></svg><span>File</span><span>View</span><span>Background</span>
    <svg class="ms-auto" width="14" height="3"><path d="M0 0h2v2H0zM6 0h2v2H6zM12 0h2v2h-2z" fill="#333"/></svg>
  </nav>
  <div class="vbar">
    <svg width="8" height="11" style="margin:0 4px"><use href="#grip"/></svg>
    <div class="slot"><svg width="18" height="14" viewBox="0 0 18 14" fill="none" stroke="#5b666d"><path d="M.5.5h4v4h-4zM.5 8.500h4v4h-4zM7.500.5h10v12h-10z"/></svg></div>
    <div class="slot"><svg width="16" height="13" viewBox="0 0 16 13" fill="#444b52"><path d="M3 0h3l1 3h2l1-3h3l3 8-6 1V6H6v3L0 8z"/><circle cx="3.500" cy="9.500" r="3.500"/><circle cx="12.500" cy="9.500" r="3.500"/><circle cx="3.500" cy="9.500" r="1.500" fill="#f3f3f3"/><circle cx="12.500" cy="9.500" r="1.500" fill="#f3f3f3"/></svg></div>
    <i class="rule"></i>
    <div class="slot"><svg width="18" height="15" viewBox="0 0 18 15" fill="#bdbdbd"><path d="M0 0h16v3H0zM0 5h4v2H0zM6 5h4v2H6zM12 5h4v2h-4zM0 9h4v2H0zM6 9h4v2H6z"/><circle cx="14" cy="11" r="3.500"/><circle cx="14" cy="11" r="1.300" fill="#f3f3f3"/></svg></div>
    <i class="rule"></i>
    <div class="slot"><svg width="17" height="12" viewBox="0 0 17 12"><path d="M0 11V0h5l1 2h8v2H4z" fill="#ffa63d"/><path d="M4 5h13l-3 7H1z" fill="#ff8c00"/></svg></div>
    <div class="slot"><svg width="14" height="13" viewBox="0 0 14 13" fill="#444b52"><path d="M0 0h3v6h8V0h3v13H0z"/><path d="M4 0h6v5H4z"/><path d="M3 8h8v3H3z" fill="#f3f3f3"/><path d="M7 1h2v3H7z" fill="#f3f3f3"/></svg></div>
    <i class="rule"></i>
    <div class="slot"><svg width="16" height="14"><use href="#print"/></svg></div>
    <div class="slot"><svg width="18" height="15" viewBox="0 0 18 15"><use href="#print" width="15" height="14"/><path d="M14 6l-4 5h3l-1 4 5-5h-3z" fill="#ff8c00" stroke="#f3f3f3" stroke-width=".5"/></svg></div>
    <div class="slot"><svg width="14" height="14" viewBox="0 0 14 16"><use href="#leaf"/><path d="M7 8l6 7" stroke="#0078d7" stroke-width="2.500"/><circle cx="6.500" cy="8" r="2.500" fill="#0078d7"/></svg></div>
    <div class="slot"><svg width="13" height="14" viewBox="0 0 13 14"><path d="M.5.500h12v13H.5z" fill="none" stroke="#bdbdbd"/><path d="M2.500 2.500h8v3h-8zM2.500 8.500h8v3h-8z" fill="#bdbdbd"/></svg></div>
    <div class="slot wide"><svg width="16" height="14" viewBox="0 0 16 14"><path d="M.5.500h15v13H.5z" fill="#fff" stroke="#5b666d"/><path d="M3 6V3h3M3 3l10 8M13 8v3h-3" stroke="#0078d7" stroke-width="1.500" fill="none"/></svg><svg width="8" height="5"><use href="#dn"/></svg></div>
    <i class="rule"></i>
    <div class="slot"><svg width="18" height="15" viewBox="0 0 18 15"><path d="M4 8L3 2M7 7V1M10 7l1-6M13 8l2-5M5 10L1 7" stroke="#444b52" stroke-width="2" stroke-linecap="round"/><path d="M3 6h11l-1 6-3 3H7z" fill="#444b52"/></svg></div>
    <div class="slot"><svg width="14" height="13" viewBox="0 0 14 14"><use href="#mag"/><circle cx="5.500" cy="5.500" r="2.500" fill="none" stroke="#4aa3e8" stroke-width="1.500"/></svg></div>
    <i class="rule"></i>
    <div class="slot"><svg width="14" height="13" viewBox="0 0 14 14"><use href="#mag"/><path d="M3 5.500h5" stroke="#444b52"/></svg></div>
    <div class="field" style="flex:none;width:78px;height:22px;margin:0 4px;padding:0 7px 0 4px"><select aria-label="Zoom" class="flex-grow-1"><option>100%</option></select><svg width="10" height="6"><use href="#dn"/></svg></div>
    <div class="slot"><svg width="14" height="13" viewBox="0 0 14 14"><use href="#mag"/><path d="M3 5.500h5M5.500 3v5" stroke="#444b52"/></svg></div>
    <i class="rule"></i>
    <div class="slot"><svg width="13" height="10" viewBox="0 0 13 10" fill="#bdbdbd"><path d="M0 0h2v10H0zM12 0v10L3 5z"/></svg></div>
    <div class="slot"><svg width="9" height="10" fill="#bdbdbd"><path d="M9 0v10L0 5z"/></svg></div>
    <div class="slot"><svg width="9" height="10" fill="#bdbdbd"><path d="M0 0v10l9-5z"/></svg></div>
    <div class="slot"><svg width="13" height="10" fill="#bdbdbd"><path d="M0 0v10l9-5zM11 0h2v10h-2z"/></svg></div>
    <i class="rule"></i>
    <div class="slot wide"><svg width="15" height="15" fill="none" stroke="#bdbdbd"><path d="M.5.5h5v5h-5zM8.500.5h5v5h-5zM.5 8.500h5v5h-5z"/></svg><svg width="8" height="5" color="#bdbdbd"><use href="#dn"/></svg></div>
    <div class="slot wide"><svg width="16" height="14" viewBox="0 0 16 14"><path d="M4 3V.5h8l3 3v10H4V11" fill="#fff" stroke="#444b52"/><path d="M0 7l4-4 5 4-5 4z" fill="#444b52"/><path d="M9 6q4 0 3 5" stroke="#0078d7" stroke-width="2" fill="none"/></svg><svg width="8" height="5"><use href="#dn"/></svg></div>
    <div class="slot"><svg width="14" height="14" viewBox="0 0 14 16"><use href="#leaf"/><path d="M2 6l4-4M2 10l8-8M2 14L12 4M6 14l6-6M10 14l2-2" stroke="#4aa3e8" stroke-width="1.500"/></svg></div>
    <div class="slot" style="width:26px"><svg width="14" height="3"><path d="M0 0h2v2H0zM6 0h2v2H6zM12 0h2v2h-2z" fill="#333"/></svg></div>
  </div>
  <div class="canvas">
    <div class="flex-grow-1 d-flex">
      <div class="sheet"><div class="inner">
        <div class="text-center ar fw-bold" style="font-size:21px;line-height:21px">Company</div>
        <div class="r2" style="line-height:18px"><b class="ar" style="font-size:14px">Order N°</b><span>1</span></div>
        <div class="r2" style="line-height:18px"><b class="ar" style="font-size:14px">Customer N°</b><span>2</span></div>
        <div class="r2 ar" style="line-height:14px;margin-left:-2px"><span>Date Collected :</span><span>6/5/2024</span></div>
        <div class="r2 ar" style="line-height:14px;margin-left:-2px"><span>Date Received :</span><span>6/5/2024</span></div>
        <div class="d-flex justify-content-between ar fw-bold" style="font-size:28px;line-height:33px"><i style="width:109px;height:1px;background:#000;margin-top:11px"></i>185<i style="width:109px;height:1px;background:#000;margin-top:11px"></i></div>
        <table class="rcpt"><colgroup><col style="width:119px"><col style="width:60px"><col style="width:60px"><col></colgroup>
          <thead><tr><th>Part</th><th class="text-center">Prix</th><th class="text-center" style="padding:0">QTY</th><th class="text-end">Total</th></tr></thead>
          <tbody><tr><td>Ceinture</td><td class="text-center">250</td><td class="text-center">3</td><td class="text-end">750.00</td></tr>
          <tr><td>Hanches</td><td class="text-center">450</td><td class="text-center">4</td><td class="text-end">1800.00</td></tr>
          <tr><td>Manches</td><td class="text-center">200</td><td class="text-center">2</td><td class="text-end">400.00</td></tr></tbody></table>
        <svg width="298" height="3"><path d="M0 1.500h298" stroke="#000" stroke-dasharray="7 3 2 3"/></svg>
        <div class="sum"><b>Montant</b><span class="hv">2950.00</span><b>Payed</b><span class="hv" style="color:#0078d7">950.00</span><span>Remaining</span><span style="color:#f00">2000.00</span><span>Returned</span><span style="color:#f00">2000.00</span><span>New Due</span><span>2000.00</span><span>Nb Articles</span><span>3</span></div>
        <svg width="184" height="27" style="margin:6px 0 7px 55px"><path d="M0 0h10v27H0zM14 0h11v27H14zM29 0h4v27h-4zM38 0h10v27H38zM53 0h4v27h-4zM62 0h4v27h-4zM70 0h5v27h-5zM79 0h10v27H79zM94 0h4v27h-4zM102 0h5v27h-5zM111 0h4v27h-4zM119 0h12v27h-12zM134 0h11v27h-11zM150 0h10v27h-10zM164 0h5v27h-5zM173 0h11v27h-11z"/></svg>
        <div class="text-center ar fw-bold" style="line-height:16px">THANK YOU</div>
      </div></div>
    </div>
    <div style="width:20px;background:#f3f3f3;padding:17px 8px 33px"><div style="width:4px;height:100%;background:#999;border-radius:2px"></div></div>
  </div>
  <div style="height:17px"></div>
  <div class="d-flex align-items-center" style="height:31px;border-top:1px solid #cfcfcf;padding:0 21px 0 13px">
    <span>Page 1 of 1</span>
    <i class="rule ms-auto" style="margin-right:8px"></i><label for="zm">100%</label>
    <svg width="14" height="12" style="margin:0 11px 0 20px"><path d="M0 6h13" stroke="#999" stroke-width="2"/></svg>
    <input id="zm" type="range" class="zoomer" value="50">
    <svg width="13" height="12" style="margin-left:12px"><path d="M0 6h13M6.500 0v12" stroke="#999" stroke-width="1.500"/></svg>
  </div>
  <svg class="cursor" width="14" height="20" viewBox="0 0 14 20"><path d="M1 1v16l4-4 3 6 3-1.500-3-5.500h5z" fill="#fff" stroke="#223"/></svg>
</section>
<script src="https://cdn.jsdelivr.net/npm/bootstrap@5.3.0/dist/js/bootstrap.bundle.min.js"></script>
</body>
</html>
